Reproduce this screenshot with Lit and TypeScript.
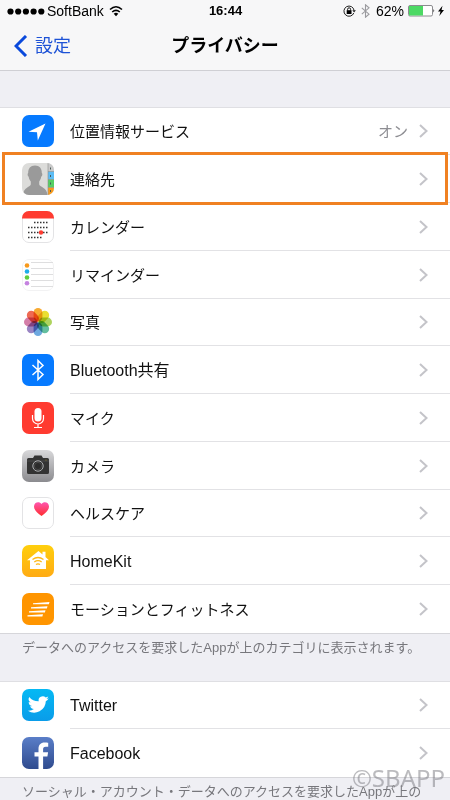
import { LitElement, html, css, svg, TemplateResult } from "lit";
import { customElement } from "lit/decorators.js";
import { classMap } from "lit/directives/class-map.js";

interface Entry {
  label: string;
  icon: string;
  value?: string;
  marked?: boolean;
}

const accessEntries: Entry[] = [
  { label: "位置情報サービス", icon: "location", value: "オン" },
  { label: "連絡先", icon: "contacts", marked: true },
  { label: "カレンダー", icon: "calendar" },
  { label: "リマインダー", icon: "reminders" },
  { label: "写真", icon: "photos" },
  { label: "Bluetooth共有", icon: "bluetooth" },
  { label: "マイク", icon: "mic" },
  { label: "カメラ", icon: "camera" },
  { label: "ヘルスケア", icon: "health" },
  { label: "HomeKit", icon: "homekit" },
  { label: "モーションとフィットネス", icon: "motion" },
];

const socialEntries: Entry[] = [
  { label: "Twitter", icon: "twitter" },
  { label: "Facebook", icon: "facebook" },
];

const tile = (fill: string) => svg`<rect width="32" height="32" rx="7" fill=${fill}/>`;
const outline = svg`<rect x=".5" y=".5" width="31" height="31" rx="6.5" fill="#fff" stroke="#e3e3e5"/>`;

const petals: [number, string][] = [
  [0, "#f7a11b"],
  [45, "#e8dc1c"],
  [90, "#a5cf4c"],
  [135, "#52b795"],
  [180, "#5e9fdc"],
  [225, "#8f78bd"],
  [270, "#d0709f"],
  [315, "#ee5a41"],
];

const calendarRows: [number, number, number][] = [
  [11.5, 12, 5],
  [16.5, 6, 7],
  [21.5, 6, 7],
  [26.5, 6, 5],
];

const glyphs: Record<string, TemplateResult> = {
  location: svg`${tile("#067aff")}<path d="M23.500 8.500 6.500 16.800 15 17.300 15.800 25.500Z" fill="#fff"/>`,
  contacts: svg`
    <clipPath id="c"><rect width="32" height="32" rx="7"/></clipPath>
    <g clip-path="url(#c)">
      <rect width="32" height="32" fill="#dcdcda"/>
      <path d="M13 2.500c4.500 0 7 3 6.800 7.500 1 .8.600 3-.6 3.800-.4 2.500-1.200 3.600-2 4.600v3c1 3 7.800 2.600 8.300 10.600H1c.4-8 6.800-7.600 7.800-10.600v-3c-1-1-1.800-2.100-2.100-4.600-1.200-.8-1.500-3-.5-3.800C6 5.500 8.500 2.500 13 2.500Z" fill="#9a9a9a"/>
      <rect x="26" width="6" height="8.500" fill="#c9c9c9"/>
      <rect x="26" y="8.500" width="6" height="8" fill="#5dbdf5"/>
      <rect x="26" y="16.500" width="6" height="8" fill="#55cf63"/>
      <rect x="26" y="24.500" width="6" height="7.500" fill="#f89a1c"/>
      <path d="M26 0v32M26 8.500h6M26 16.500h6M26 24.500h6" stroke="#8d8d8a" stroke-width=".6"/>
      <path d="M28.500 4.500v2M28.500 12v2M28.500 19.500v2M28.500 27v2" stroke="#4a5a58" stroke-width="1"/>
    </g>`,
  calendar: svg`${outline}
    <path d="M0 7a7 7 0 0 1 7-7h18a7 7 0 0 1 7 7v.5H0Z" fill="#ff3b30"/>
    ${calendarRows.map(
      ([y, x, n]) => svg`<path d="M${x} ${y}h${n * 3}" stroke="#333" stroke-width="1.500" stroke-dasharray="1.500 1.500"/>`,
    )}
    <circle cx="19" cy="21.500" r="2.200" fill="#ff3b30"/>`,
  reminders: svg`
    <rect x=".5" y=".5" width="31" height="31" rx="6.500" fill="#fff" stroke="#f2f2f3"/>
    <path d="M9 3.500h22M9 9.500h22M9 15.500h22M9 21.500h22M9 27.500h22" stroke="#dededf"/>
    <circle cx="5" cy="6.500" r="2.300" fill="#f79a1e"/><circle cx="5" cy="12.500" r="2.300" fill="#1fadea"/>
    <circle cx="5" cy="18.500" r="2.300" fill="#5fce3e"/><circle cx="5" cy="24.200" r="2.300" fill="#c583e0"/>`,
  photos: svg`${petals.map(
    ([turn, fill]) =>
      svg`<rect class="petal" x="11.600" y="2" width="8.800" height="13.500" rx="4.400" fill=${fill} transform="rotate(${turn} 16 16)"/>`,
  )}`,
  bluetooth: svg`${tile("#067aff")}<path d="m10.500 11 10.500 9.500-5 5V6.500l5 5L10.500 21" fill="none" stroke="#fff" stroke-width="1.500"/>`,
  mic: svg`${tile("#ff3b30")}
    <rect x="12.500" y="6" width="7" height="13.500" rx="3.500" fill="#fff"/>
    <path d="M10.500 13v3.500a5.500 5.500 0 0 0 11 0V13M16 22v3.500M12 25.500h8" fill="none" stroke="#fff" stroke-width="1.200"/>`,
  camera: svg`
    <linearGradient id="g" x2="0" y2="1"><stop stop-color="#d8d8da"/><stop offset="1" stop-color="#8b8b8f"/></linearGradient>
    ${tile("url(#g)")}
    <path d="M5 9.500q0-1.500 1.500-1.500H11l1.500-2.500h7L21 8h4.500Q27 8 27 9.500v13q0 1.500-1.500 1.500h-19Q5 24 5 22.500Z" fill="#333"/>
    <path d="M5 11h22" stroke="#555" stroke-width=".7"/>
    <circle cx="16" cy="16" r="5.200" fill="#2b2b2b" stroke="#aeb0b2" stroke-width="1"/>
    <circle cx="16" cy="16" r="3.600" fill="none" stroke="#555" stroke-width=".7"/>
    <circle cx="24" cy="10" r=".5" fill="#a5922d"/>`,
  health: svg`
    <linearGradient id="g" x2="0" y2="1"><stop stop-color="#ff56b0"/><stop offset="1" stop-color="#ff2d2d"/></linearGradient>
    ${outline}
    <path d="M19.500 19C15 16 12 13 12 9.500c0-4.700 5.500-5.500 7.500-2.500C21.500 4 27 4.800 27 9.500c0 3.500-3 6.500-7.500 9.500Z" fill="url(#g)"/>`,
  homekit: svg`
    <linearGradient id="g" x2="0" y2="1"><stop stop-color="#ffcf0d"/><stop offset="1" stop-color="#ffab14"/></linearGradient>
    ${tile("url(#g)")}
    <path d="m16.500 6 4 3.500V6.800h3V12l3.500 3.200h-3V24h-16v-8.800H5Z" fill="#fff"/>
    <g fill="none" stroke="#ffb914" stroke-width="1.300"><path d="M10.500 14.500q5.500-4 11 0M12.300 17q3.700-2.600 7.400 0M14 19.500q2-1.400 4 0"/></g>`,
  motion: svg`${tile("#ff9500")}
    <g fill="#fff"><path d="m11 10.200 16.500-1.200-.6 2.200H11ZM9 14.200l16.500-1-.6 2.200H9ZM7 18.200l16.500-1-.6 2.200H7ZM5.500 22.200l15.500-1-.6 2.200H5.500Z"/></g>`,
  twitter: svg`
    <linearGradient id="g" x2="0" y2="1"><stop stop-color="#05b9f4"/><stop offset="1" stop-color="#0a9ce9"/></linearGradient>
    ${tile("url(#g)")}
    <path d="M26.800 9.200a8 8 0 0 1-2.300.6 4 4 0 0 0 1.800-2.200 8 8 0 0 1-2.600 1 4.100 4.100 0 0 0-7 3.700A11.600 11.600 0 0 1 7.300 8a4.100 4.100 0 0 0 1.300 5.500 4 4 0 0 1-1.900-.5 4.100 4.100 0 0 0 3.300 4 4 4 0 0 1-1.900.1 4.100 4.100 0 0 0 3.800 2.900A8.200 8.200 0 0 1 5.900 21.700 11.600 11.600 0 0 0 23.800 12.300 8 8 0 0 0 26.800 9.200Z" fill="#fff"/>`,
  facebook: svg`
    <linearGradient id="g" x2="0" y2="1"><stop stop-color="#5a7ec8"/><stop offset="1" stop-color="#2f4b8e"/></linearGradient>
    ${tile("url(#g)")}
    <path d="M16.500 32V19.500h-4v-4.300h4v-3.400c0-4 2.300-6.300 6-6.300 1.500 0 3 .1 3.700.3v4h-2.600c-2 0-2.500 1-2.500 2.500v2.900h5l-.7 4.300h-4.300V32Z" fill="#fff"/>`,
};

@customElement("app-icon")
class AppIcon extends LitElement {
  static properties = { name: {} };
  declare name: string;

  static styles = css`
    :host {
      display: block;
      flex: none;
    }
    .art {
      display: block;
      width: 32px;
      height: 32px;
    }
    .petal {
      mix-blend-mode: multiply;
      opacity: 0.9;
    }
  `;

  render() {
    return html`<svg class="art" viewBox="0 0 32 32" aria-hidden="true">${glyphs[this.name]}</svg>`;
  }
}

@customElement("settings-list")
class SettingsList extends LitElement {
  static properties = { entries: { attribute: false } };
  declare entries: Entry[];

  static styles = css`
    :host {
      display: block;
      background: #fff;
    }
    .list {
      list-style: none;
      margin: 0;
      padding: 0;
    }
    .item {
      position: relative;
      height: 48px;
    }
    .item:nth-child(4n + 1) {
      height: 47px;
    }
    .link {
      display: flex;
      gap: 16px;
      align-items: stretch;
      height: 100%;
      padding-left: 22px;
      box-sizing: border-box;
      color: #111;
      text-decoration: none;
    }
    .icon {
      align-self: center;
      margin-bottom: 1px;
    }
    .body {
      flex: 1;
      display: flex;
      align-items: center;
      padding-right: 22px;
      border-bottom: 1px solid #e2e2e5;
      font-size: 15px;
      line-height: 24px;
    }
    .item:last-child .body {
      border-bottom-color: transparent;
    }
    .label,
    .value {
      padding-top: 2px;
    }
    .label {
      flex: 1;
    }
    .label.latin {
      font-size: 16px;
    }
    .value {
      color: #8e8e93;
      margin-right: 11px;
    }
    .chevron {
      display: block;
      width: 9px;
      height: 14px;
    }
    .marker {
      position: absolute;
      inset: -3px 2px -2px;
      border: 3px solid #f08122;
      pointer-events: none;
      z-index: 1;
    }
  `;

  render() {
    return html`<ul class="list">
      ${this.entries.map(
        (entry) => html`<li class="item">
          <a class="link" href="#${entry.icon}">
            <app-icon class="icon" name=${entry.icon}></app-icon>
            <span class="body">
              <span class=${classMap({ label: true, latin: /^[A-Z]/.test(entry.label) })}>${entry.label}</span>
              ${entry.value ? html`<span class="value">${entry.value}</span>` : null}
              <svg class="chevron" viewBox="0 0 9 14" aria-hidden="true">
                <path d="m1 1 6.500 6L1 13" fill="none" stroke="#c4c4c9" stroke-width="2" />
              </svg>
            </span>
          </a>
          ${entry.marked ? html`<div class="marker"></div>` : null}
        </li>`,
      )}
    </ul>`;
  }
}

@customElement("app-root")
class AppRoot extends LitElement {
  static styles = css`
    :host {
      display: block;
      position: relative;
      height: 100vh;
      overflow: hidden;
      background: #efeff4;
      color: #000;
      font-family: "Liberation Sans", "Noto Sans CJK JP", sans-serif;
    }
    .top {
      background: #f7f7f8;
      border-bottom: 1px solid #cfcfd4;
    }
    .status {
      display: grid;
      grid-template-columns: 1fr auto 1fr;
      align-items: center;
      height: 22px;
      padding: 0 6px 0 7px;
      font-size: 14px;
      line-height: 22px;
    }
    .carrier,
    .indicators {
      display: flex;
      align-items: center;
    }
    .indicators {
      justify-content: flex-end;
    }
    .dots {
      margin-right: 2px;
    }
    .wifi {
      margin-left: 5px;
    }
    .clock {
      font-size: 13px;
      font-weight: bold;
    }
    .bt {
      margin: 0 6px 0 5px;
    }
    .battery {
      margin: 0 3px 0 4px;
    }
    .nav {
      display: grid;
      grid-template-columns: 1fr auto 1fr;
      align-items: center;
      height: 48px;
      padding: 0 14px;
    }
    .back {
      display: flex;
      align-items: center;
      gap: 7px;
      justify-self: start;
      padding: 0;
      border: 0;
      background: none;
      color: #1d52d6;
      font: inherit;
      font-size: 18px;
      line-height: 24px;
    }
    .title {
      margin: 0;
      font-size: 18px;
      line-height: 24px;
      font-weight: bold;
    }
    .group {
      margin-top: 36px;
      border-top: 1px solid #dfdfe3;
    }
    .group.social {
      margin-top: 19px;
    }
    .note {
      margin: 0;
      padding: 4px 22px;
      border-top: 1px solid #d6d6da;
      color: #77777c;
      font-size: 13px;
      line-height: 20px;
    }
    .watermark {
      position: absolute;
      right: 5px;
      bottom: 6px;
      color: rgba(120, 120, 125, 0.5);
      font-family: "Noto Sans", sans-serif;
      font-size: 24px;
      line-height: 32px;
    }
  `;

  render() {
    return html`
      <header class="top">
        <div class="status">
          <div class="carrier">
            <svg class="dots" width="38" height="7" viewBox="0 0 38 7" aria-hidden="true">
              ${[0, 1, 2, 3, 4].map((i) => svg`<circle cx=${3.5 + i * 7.7} cy="3.500" r="3.100"/>`)}
            </svg>
            <span>SoftBank</span>
            <svg class="wifi" width="14" height="12" viewBox="0 0 14 12" aria-hidden="true">
              <path d="M1 4.500q6-5.500 12 0M3.200 7q3.800-3.300 7.600 0" fill="none" stroke="#000" stroke-width="1.600" />
              <path d="m7 11.200-2.300-2.500q2.300-1.700 4.600 0Z" />
            </svg>
          </div>
          <span class="clock">16:44</span>
          <div class="indicators">
            <svg width="13" height="12" viewBox="0 0 13 12" aria-hidden="true">
              <path d="M10.800 8A5.100 5.100 0 1 1 11.100 5.500" fill="none" stroke="#222" stroke-width="1" />
              <path d="M9.300 5.300h3.600L11.100 7.600Z" fill="#222" />
              <rect x="3.700" y="5.200" width="4.800" height="3.800" />
              <path d="M4.600 5.500V4.300a1.500 1.500 0 0 1 3 0v1.200" fill="none" stroke="#000" stroke-width=".9" />
            </svg>
            <svg class="bt" width="9" height="14" viewBox="0 0 9 14" aria-hidden="true">
              <path d="m.8 3.800 7.200 6.400L4.500 13.200V.8L8 3.800.8 10.200" fill="none" stroke="#9a9a9e" stroke-width="1.100" />
            </svg>
            <span>62%</span>
            <svg class="battery" width="27" height="12" viewBox="0 0 27 12" aria-hidden="true">
              <rect x=".5" y=".5" width="24" height="10.500" rx="1.500" fill="#fff" stroke="#8c8c90" />
              <rect x="1" y="1" width="14" height="9.500" fill="#4cd964" />
              <path d="M25.500 4q1.500 1.800 0 3.600Z" />
            </svg>
            <svg width="6" height="12" viewBox="0 0 6 12" aria-hidden="true">
              <path d="M4.500.8 0 6.500h2.500L1.300 11 6 5H3.500Z" />
            </svg>
          </div>
        </div>
        <nav class="nav">
          <button class="back" type="button">
            <svg width="14" height="22" viewBox="0 0 14 22" aria-hidden="true">
              <path d="M12 1 2 11l10 10" fill="none" stroke="#0a49dc" stroke-width="3" />
            </svg>
            設定
          </button>
          <h1 class="title">プライバシー</h1>
        </nav>
      </header>
      <main>
        <section class="group">
          <settings-list .entries=${accessEntries}></settings-list>
          <p class="note">データへのアクセスを要求したAppが上のカテゴリに表示されます。</p>
        </section>
        <section class="group social">
          <settings-list .entries=${socialEntries}></settings-list>
          <p class="note">ソーシャル・アカウント・データへのアクセスを要求したAppが上の</p>
        </section>
      </main>
      <div class="watermark">©SBAPP</div>
    `;
  }
}
